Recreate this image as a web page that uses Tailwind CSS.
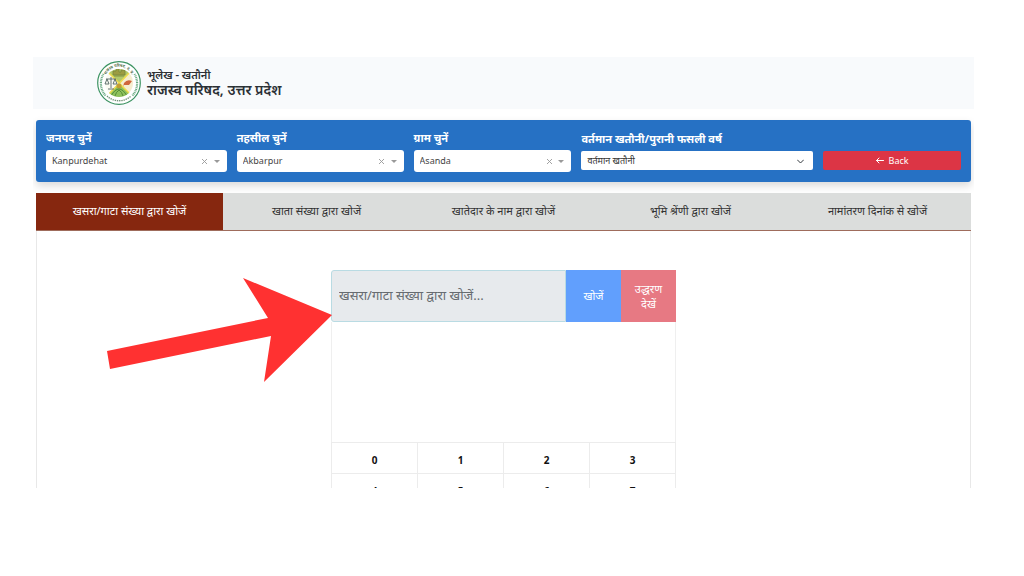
<!DOCTYPE html>
<html lang="hi">
<head>
    <meta charset="UTF-8">
    <meta name="viewport" content="width=device-width, initial-scale=1.0">
    <title>भूलेख - खतौनी</title>
    <script src="https://cdn.jsdelivr.net/npm/@tailwindcss/browser@4"></script>
</head>
<body class="bg-white font-['Noto_Sans','Noto_Sans_Devanagari',sans-serif] text-[#2b3035]">

  <div class="relative flex h-screen flex-col pt-[57px] pr-[50px] pb-[88px] pl-[33px]">
    <div class="flex min-h-0 flex-1 flex-col overflow-hidden">

      <!-- Header -->
      <header class="flex shrink-0 items-center gap-[6px] bg-[#f8fafc] px-16 py-1">
        <svg class="size-11" viewBox="0 0 44 44" role="img" aria-label="राजस्व परिषद">
          <defs>
            <path id="rim" d="M8 24 A14.5 14.5 0 1 1 36 24" />
            <clipPath id="disc"><circle cx="22" cy="22" r="14" /></clipPath>
          </defs>
          <circle cx="22" cy="22" r="21.3" fill="#fff" stroke="#3c9362" stroke-width="1.2" />
          <path d="M6.5 13 A18.2 18.2 0 0 0 9 35M37.5 13 A18.2 18.2 0 0 1 35 35" fill="none" stroke="#68a981" stroke-width="2.2" stroke-dasharray="1 .7" />
          <g clip-path="url(#disc)">
            <path d="M8 8h28L22 22z" fill="#b2c86a" />
            <path d="M8 36h28L22 22z" fill="#8ec15b" />
            <path d="M22 22L36 8v28z" fill="#f5edcf" />
            <path d="M22 22L8 8v28z" fill="#fbfbf3" />
            <path d="M11 11L34 34M34 10L11 34" stroke="#eedc4d" stroke-width="1.6" />
            <path d="M16 14v-4h3V8h3v3h2V9h4v5zM17 15h10" fill="#9b9c42" stroke="#78863a" stroke-width=".8" />
            <circle cx="22" cy="25" r="2.5" fill="#c19d35" />
            <path d="M14 35q4-7 8-7t8 7M18 35q1-4 4-6 3 2 4 6" fill="none" stroke="#558c38" />
          </g>
          <path d="M14 16v11M11 28h6M9 18h10M10 18l-2 5h4zM18 18l-2 5h4z" fill="none" stroke="#526464" stroke-width=".9" />
          <path d="M27 22q3-4 8-2l-3 4h-5l-1 2z" fill="#d0663c" />
          <text class="fill-[#54704c] text-[4px] font-bold"><textPath href="#rim" startOffset="50%" text-anchor="middle">राजस्व परिषद, उ. प्र.</textPath></text>
          <path d="M10 35 A17.5 17.5 0 0 0 34 35" fill="none" stroke="#6f9176" stroke-width="1.3" stroke-dasharray="1.4 .8" />
        </svg>
        <div class="font-semibold">
          <p class="text-[11px] leading-[14px]">भूलेख - खतौनी</p>
          <h1 class="text-[14px] leading-4">राजस्व परिषद, उत्तर प्रदेश</h1>
        </div>
      </header>

      <main class="mr-[3px] ml-[3px] mt-[11px] flex flex-1 flex-col">

        <!-- Filters -->
        <form class="grid shrink-0 grid-cols-[181fr_167fr_158fr_232fr_138fr] gap-[10px] rounded-[3px] bg-[#2671c4] px-[10px] pt-[9px] pb-[10px] shadow-[0_4px_8px_rgba(0,0,0,0.15)]">
          <div>
            <label for="janpad" class="block h-[21px] text-[11px] leading-[17px] font-bold text-white">जनपद चुनें</label>
            <div class="relative">
              <select id="janpad" class="block h-[22px] w-full appearance-none rounded-[3px] bg-white px-[6px] text-[9px] text-[#444]"><option>Kanpurdehat</option></select>
              <button type="button" aria-label="हटाएं" class="absolute top-0 right-[18px] flex h-full w-2 items-center justify-center"><svg class="size-[5px]" viewBox="0 0 5 5" stroke="#999" stroke-width=".9"><path d="M0 0l5 5M5 0L0 5" /></svg></button>
              <svg class="pointer-events-none absolute top-[10px] right-[7px] h-[3px] w-[6px]" viewBox="0 0 6 3" fill="#999"><path d="M0 0h6L3 3z" /></svg>
            </div>
          </div>
          <div>
            <label for="tehsil" class="block h-[21px] text-[11px] leading-[17px] font-bold text-white">तहसील चुनें</label>
            <div class="relative">
              <select id="tehsil" class="block h-[22px] w-full appearance-none rounded-[3px] bg-white px-[6px] text-[9px] text-[#444]"><option>Akbarpur</option></select>
              <button type="button" aria-label="हटाएं" class="absolute top-0 right-[18px] flex h-full w-2 items-center justify-center"><svg class="size-[5px]" viewBox="0 0 5 5" stroke="#999" stroke-width=".9"><path d="M0 0l5 5M5 0L0 5" /></svg></button>
              <svg class="pointer-events-none absolute top-[10px] right-[7px] h-[3px] w-[6px]" viewBox="0 0 6 3" fill="#999"><path d="M0 0h6L3 3z" /></svg>
            </div>
          </div>
          <div>
            <label for="gram" class="block h-[21px] text-[11px] leading-[17px] font-bold text-white">ग्राम चुनें</label>
            <div class="relative">
              <select id="gram" class="block h-[22px] w-full appearance-none rounded-[3px] bg-white px-[6px] text-[9px] text-[#444]"><option>Asanda</option></select>
              <button type="button" aria-label="हटाएं" class="absolute top-0 right-[18px] flex h-full w-2 items-center justify-center"><svg class="size-[5px]" viewBox="0 0 5 5" stroke="#999" stroke-width=".9"><path d="M0 0l5 5M5 0L0 5" /></svg></button>
              <svg class="pointer-events-none absolute top-[10px] right-[7px] h-[3px] w-[6px]" viewBox="0 0 6 3" fill="#999"><path d="M0 0h6L3 3z" /></svg>
            </div>
          </div>
          <div>
            <label for="varsh" class="block h-[22px] pt-px text-[11px] leading-[17px] font-bold text-white">वर्तमान खतौनी/पुरानी फसली वर्ष</label>
            <div class="relative">
              <select id="varsh" class="block h-[19px] w-full appearance-none rounded-[2px] bg-white px-[6px] text-[9px] text-[#333]"><option>वर्तमान खतौनी</option></select>
              <svg class="pointer-events-none absolute top-[8px] right-[9px] h-[5px] w-[7px]" viewBox="0 0 7 5" fill="none" stroke="#343a40" stroke-linecap="round" stroke-linejoin="round"><path d="M.5 1l3 3 3-3" /></svg>
            </div>
          </div>
          <button type="button" class="mt-[22px] flex h-[19px] items-center justify-center gap-[5px] rounded-[2px] bg-[#dc3545] text-[9px] text-white">
            <svg class="h-[7px] w-[8px]" viewBox="0 0 8 7" fill="none" stroke="currentColor" stroke-linecap="round"><path d="M7.5 3.5h-7M3 1L.5 3.5 3 6" /></svg>
            Back
          </button>
        </form>

        <!-- Tabs -->
        <nav class="mt-[11px] grid shrink-0 grid-cols-5 border-b border-[#9f6c5c] bg-[#dbdddc] text-[11px] text-[#333]">
          <button type="button" class="h-[37px] bg-[#86270f] text-white">खसरा/गाटा संख्या द्वारा खोजें</button>
          <button type="button" class="h-[37px]">खाता संख्या द्वारा खोजें</button>
          <button type="button" class="h-[37px]">खातेदार के नाम द्वारा खोजें</button>
          <button type="button" class="h-[37px]">भूमि श्रेंणी द्वारा खोजें</button>
          <button type="button" class="h-[37px]">नामांतरण दिनांक से खोजें</button>
        </nav>

        <section class="flex flex-1 justify-center border-x border-[#e8e8e8] pt-[39px]">
          <div class="w-[345px]">
            <form class="flex h-[52px]">
              <input type="text" aria-label="खसरा/गाटा संख्या" placeholder="खसरा/गाटा संख्या द्वारा खोजें..." class="min-w-0 flex-1 rounded-l-[3px] border border-[#b9dbe3] bg-[#e7eaed] px-[7px] text-[13px] text-[#555] placeholder:text-[#666b70]">
              <button type="button" class="w-[55px] bg-[#619ffd] text-[11px] text-white">खोजें</button>
              <button type="button" class="w-[55px] bg-[#e77983] px-2 text-[11px] leading-[15px] text-white">उद्धरण देखें</button>
            </form>
            <div class="h-[120px] border-x border-[#efefef]"></div>
            <!-- Keypad -->
            <div class="grid grid-cols-4 border-t border-l border-[#ececec] text-[10px] font-bold text-[#111]">
              <button type="button" class="h-[31px] border-r border-b border-[#ececec] pt-1">0</button>
              <button type="button" class="h-[31px] border-r border-b border-[#ececec] pt-1">1</button>
              <button type="button" class="h-[31px] border-r border-b border-[#ececec] pt-1">2</button>
              <button type="button" class="h-[31px] border-r border-b border-[#ececec] pt-1">3</button>
              <button type="button" class="h-[31px] border-r border-b border-[#ececec] pt-1">4</button>
              <button type="button" class="h-[31px] border-r border-b border-[#ececec] pt-1">5</button>
              <button type="button" class="h-[31px] border-r border-b border-[#ececec] pt-1">6</button>
              <button type="button" class="h-[31px] border-r border-b border-[#ececec] pt-1">7</button>
            </div>
          </div>
        </section>
      </main>
    </div>

    <!-- Arrow pointing at the search box -->
    <svg class="pointer-events-none absolute top-[277px] left-[106px] h-[106px] w-[227px]" viewBox="106 277 227 106" fill="#ff3131" aria-hidden="true">
      <path d="M107 351L268 318 243 278 332 315 264 382 271 336 110 369z" />
    </svg>
  </div>

</body>
</html>
